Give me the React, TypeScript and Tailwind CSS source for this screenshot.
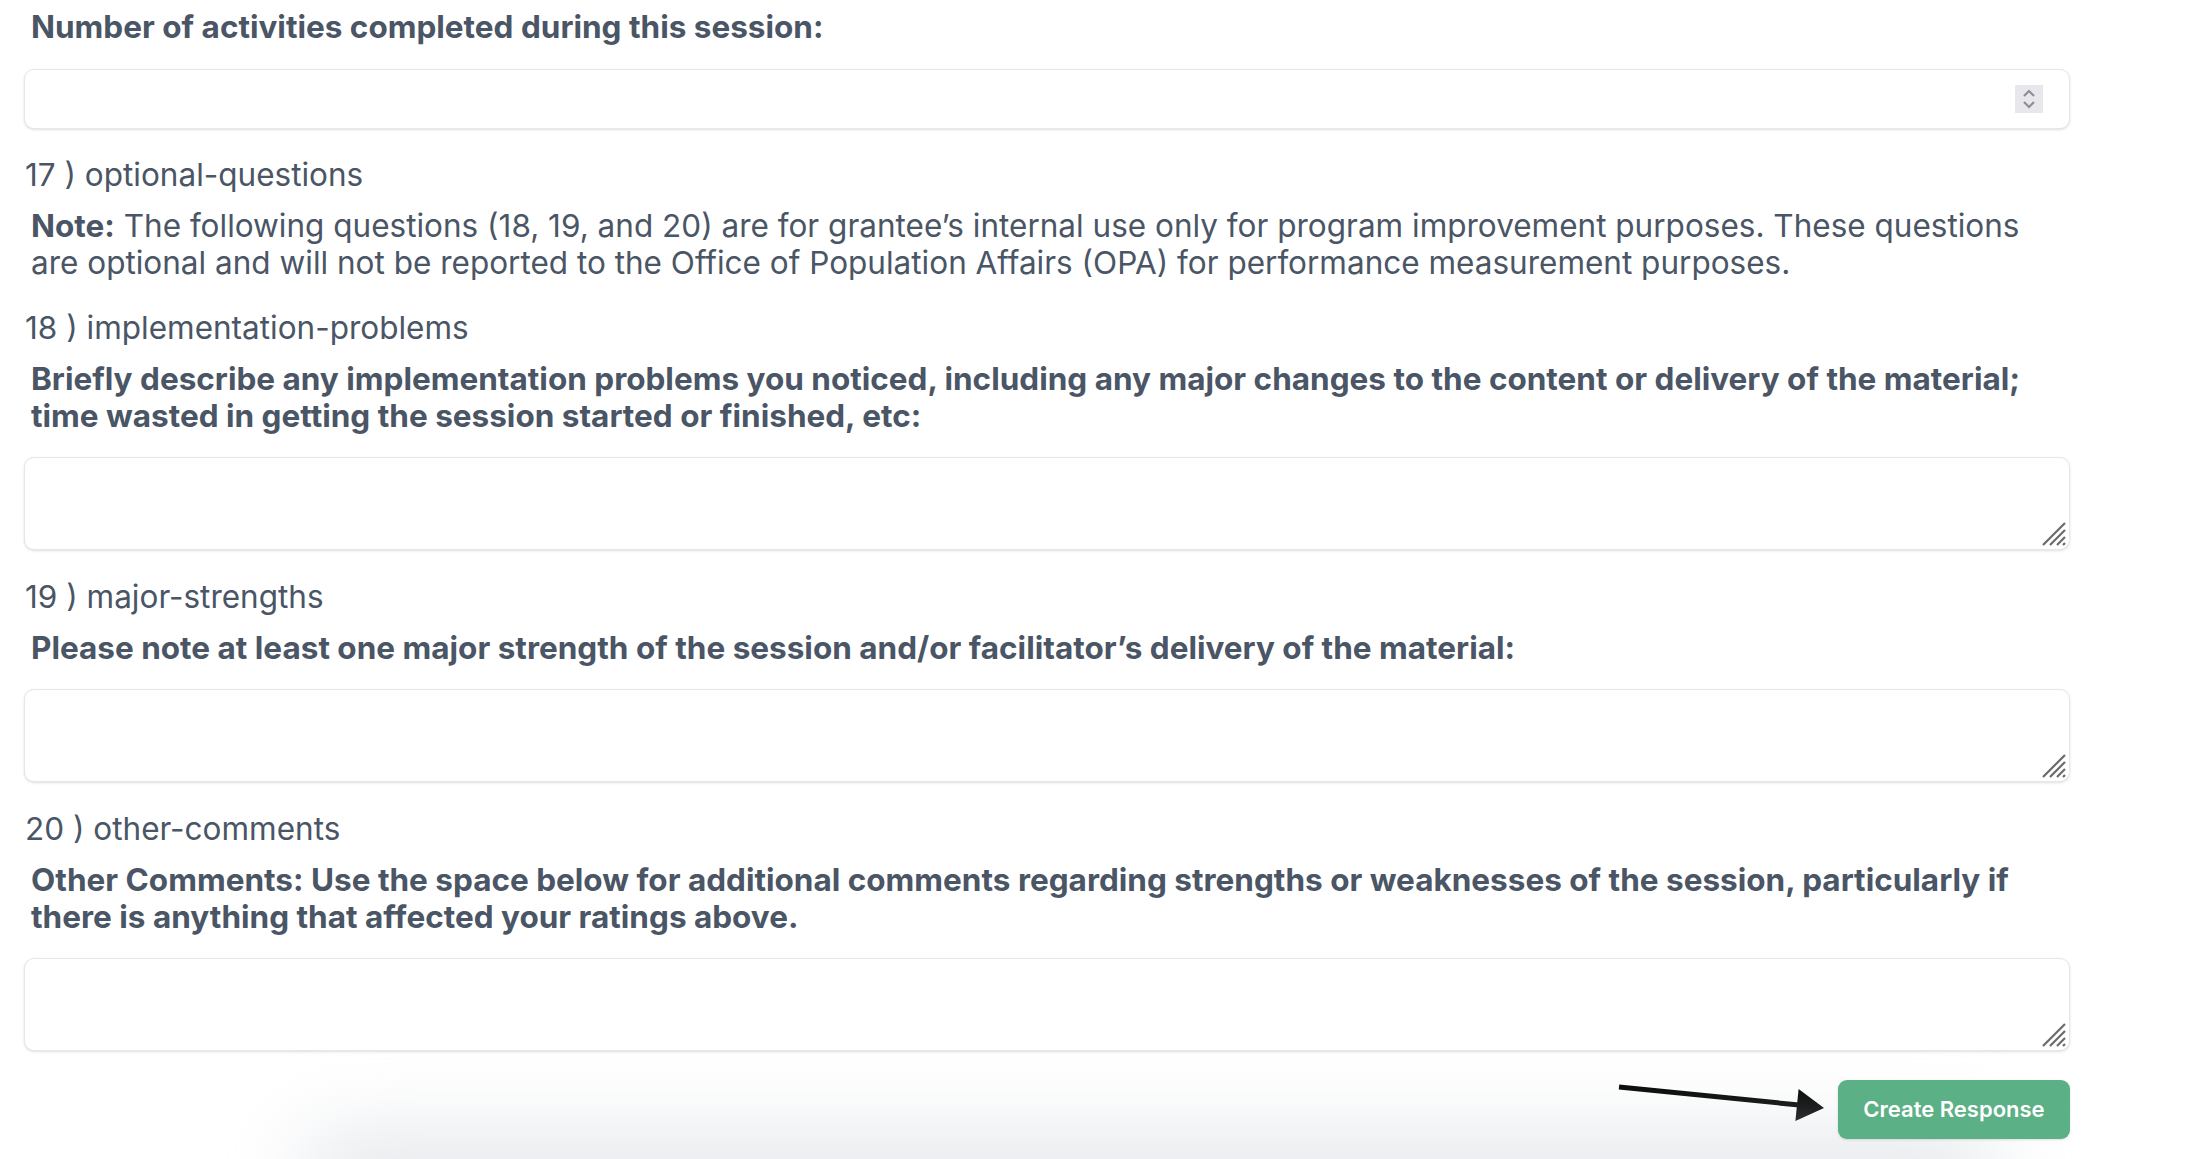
import React from "react";

const font = { fontFamily: "Inter, 'Noto Sans', sans-serif" };

function ResizeGrip() {
	return (
		<svg
			className="absolute right-[3px] bottom-[3px] pointer-events-none"
			width="26"
			height="26"
			viewBox="0 0 26 26"
		>
			<path d="M2 24 L24 2 M9 24 L24 9 M16 24 L24 16 M22 24 L24 22" stroke="#6b6b6b" strokeWidth="2.2" />
		</svg>
	);
}

function TextBox() {
	return (
		<div className="relative mt-[23px]">
			<textarea className="block w-full h-[93px] resize-none rounded-[10px] border border-gray-200 bg-white shadow-sm outline-none" />
			<ResizeGrip />
		</div>
	);
}

interface QuestionProps {
	num: number;
	slug: string;
	children: React.ReactNode;
	first?: boolean;
}

function Question({ num, slug, children, first }: QuestionProps) {
	return (
		<div className={first ? "mt-[27px]" : "mt-[28px]"}>
			<div className="pl-px text-[31.5px] leading-[37px] font-normal">
				{num} ) {slug}
			</div>
			<div className="mt-[14px] pl-[7px] text-[31.5px] leading-[37px]">{children}</div>
		</div>
	);
}

export default function App() {
	return (
		<div className="relative h-[1159px] w-full overflow-hidden bg-white text-gray-600" style={font}>
			<div className="w-[2070px] pl-6 pt-2">
				<div className="pl-[7px] text-[31.5px] leading-[37px] font-bold">
					Number of activities completed during this session:
				</div>

				<div className="relative mt-[24px] h-[60px] rounded-[10px] border border-gray-200 bg-white shadow-sm">
					<div className="absolute right-[26px] top-[15px] flex h-[28px] w-[28px] flex-col items-center justify-center bg-[#e8e8ec]">
						<svg width="14" height="22" viewBox="0 0 14 22">
							<path d="M2 8 L7 3 L12 8 M2 14 L7 19 L12 14" fill="none" stroke="#8e8e99" strokeWidth="2.2" />
						</svg>
					</div>
				</div>

				<Question num={17} slug="optional-questions" first>
					<span className="font-bold">Note:</span> The following questions (18, 19, and 20) are for grantee’s
					internal use only for program improvement purposes. These questions are optional and will not be
					reported to the Office of Population Affairs (OPA) for performance measurement purposes.
				</Question>

				<Question num={18} slug="implementation-problems">
					<span className="font-bold">
						Briefly describe any implementation problems you noticed, including any major changes to the
						content or delivery of the material; time wasted in getting the session started or finished, etc:
					</span>
				</Question>
				<TextBox />

				<Question num={19} slug="major-strengths">
					<span className="font-bold">
						Please note at least one major strength of the session and/or facilitator’s delivery of the
						material:
					</span>
				</Question>
				<TextBox />

				<Question num={20} slug="other-comments">
					<span className="font-bold">
						Other Comments: Use the space below for additional comments regarding strengths or weaknesses of
						the session, particularly if there is anything that affected your ratings above.
					</span>
				</Question>
				<TextBox />

				<div className="mt-[28px] flex items-center justify-end gap-[11px]">
					<svg width="216" height="60" viewBox="0 0 216 60">
						<line x1="8" y1="8" x2="188" y2="26" stroke="#000" strokeWidth="5" />
						<polygon points="213,29 184.4,41.9 187.6,10.1" fill="#000" />
					</svg>
					<button
						type="button"
						className="relative z-10 h-[59px] w-[232px] rounded-[9px] bg-[#5bb086] text-[22px] font-semibold text-white shadow-sm"
					>
						Create Response
					</button>
				</div>
			</div>

			<div className="pointer-events-none absolute left-[300px] top-[1135px] h-[80px] w-[1700px] rounded-full bg-gray-300/60 blur-2xl" />
		</div>
	);
}
